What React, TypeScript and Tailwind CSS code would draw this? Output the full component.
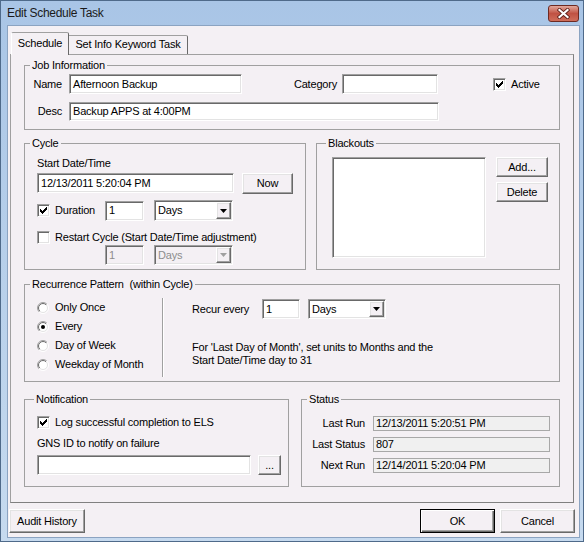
import React from 'react';

const sunken =
  'border border-[#a0a0a0] border-r-white border-b-white shadow-[inset_1px_1px_0_#696969,inset_-1px_-1px_0_#e3e3e3]';
const raised =
  'border border-white border-r-[#696969] border-b-[#696969] shadow-[inset_-1px_-1px_0_#a0a0a0,inset_1px_1px_0_#e3e3e3]';

function TextBox({ className = '', value = '', disabled = false }: { className?: string; value?: string; disabled?: boolean }) {
  return (
    <div
      className={`${sunken} ${disabled ? 'bg-[#f4f0f4] text-[#8d8d8d]' : 'bg-white'} flex items-center pl-[3px] whitespace-nowrap overflow-hidden shrink-0 ${className}`}
    >
      {value}
    </div>
  );
}

function Combo({ className = '', value, disabled = false }: { className?: string; value: string; disabled?: boolean }) {
  return (
    <div className={`${sunken} ${disabled ? 'bg-[#f4f0f4] text-[#8d8d8d]' : 'bg-white'} flex p-[1px] shrink-0 ${className}`}>
      <span className="flex-1 flex items-center pl-[2px]">{value}</span>
      <span className={`${raised} bg-[#f4f0f4] w-[15px] flex items-center justify-center`}>
        <svg width="7" height="4" viewBox="0 0 7 4">
          <path d="M0 0h7L3.5 4z" fill={disabled ? '#a0a0a0' : '#000'} />
        </svg>
      </span>
    </div>
  );
}

function Button({ className = '', label, isDefault = false }: { className?: string; label: string; isDefault?: boolean }) {
  return (
    <button
      className={`${
        isDefault
          ? 'border border-black shadow-[inset_1px_1px_0_#fff,inset_-1px_-1px_0_#696969,inset_-2px_-2px_0_#a0a0a0]'
          : raised
      } bg-[#f4f0f4] flex items-center justify-center shrink-0 ${className}`}
    >
      {label}
    </button>
  );
}

function CheckMark() {
  return (
    <svg width="7" height="7" viewBox="0 0 7 7" shapeRendering="crispEdges">
      <path
        d="M6 0h1v1h-1z M5 1h2v1h-2z M0 2h1v1h-1z M4 2h3v1h-3z M0 3h2v1h-2z M3 3h3v1h-3z M0 4h5v1h-5z M1 5h3v1h-3z M2 6h1v1h-1z"
        fill="#000"
      />
    </svg>
  );
}

function Check({ checked = false, label, labelClass = '' }: { checked?: boolean; label: string; labelClass?: string }) {
  return (
    <div className="flex items-center h-[13px] shrink-0">
      <span className={`${sunken} bg-white w-[13px] h-[13px] flex items-center justify-center shrink-0`}>
        {checked && <CheckMark />}
      </span>
      <span className={`ml-[5px] whitespace-nowrap ${labelClass}`}>{label}</span>
    </div>
  );
}

function Radio({ checked = false, label }: { checked?: boolean; label: string }) {
  return (
    <div className="flex items-center h-[19px]">
      <svg width="12" height="12" viewBox="0 0 12 12">
        <defs>
          <linearGradient id="rOuter" x1="0" y1="0" x2="1" y2="1">
            <stop offset="0.5" stopColor="#a0a0a0" />
            <stop offset="0.5" stopColor="#ffffff" />
          </linearGradient>
          <linearGradient id="rInner" x1="0" y1="0" x2="1" y2="1">
            <stop offset="0.5" stopColor="#696969" />
            <stop offset="0.5" stopColor="#e3e3e3" />
          </linearGradient>
        </defs>
        <circle cx="6" cy="6" r="5.5" fill="none" stroke="url(#rOuter)" />
        <circle cx="6" cy="6" r="4.5" fill="#fff" stroke="url(#rInner)" />
        {checked && <circle cx="6" cy="6" r="2" fill="#000" />}
      </svg>
      <span className="ml-[6px] whitespace-nowrap">{label}</span>
    </div>
  );
}

function Group({
  title,
  className = '',
  legendClass = 'ml-[5px]',
  children,
}: {
  title: string;
  className?: string;
  legendClass?: string;
  children: React.ReactNode;
}) {
  return (
    <fieldset className={`border border-[#a0a0a0] shrink-0 ${className}`}>
      <legend className={`px-[2px] leading-[13px] whitespace-pre ${legendClass}`}>{title}</legend>
      {children}
    </fieldset>
  );
}

function StatusRow({ label, value }: { label: string; value: string }) {
  return (
    <div className="flex items-center h-[15px]">
      <span className="w-[63px] text-right whitespace-nowrap">{label}</span>
      <div className="ml-[8px] w-[177px] h-[15px] border border-[#a8a8a8] bg-[#f0f0f0] flex items-center pl-[2px] whitespace-nowrap">
        {value}
      </div>
    </div>
  );
}

export default function App() {
  return (
    <div className="w-[584px] h-[542px] flex flex-col border border-[#4f6a8a] bg-gradient-to-b from-[#a9c5e6] to-[#c6daef] font-['Liberation_Sans',Arial,sans-serif] text-[11px] tracking-[-0.2px] leading-[13px] text-black overflow-hidden">
      {/* Title bar */}
      <div className="h-[24px] flex items-center pl-[6px] pr-[4px] shrink-0">
        <span className="text-[12px] tracking-[-0.3px] text-[#1a1a1a]">Edit Schedule Task</span>
        <button className="ml-auto w-[31px] h-[17px] rounded-[3px] border border-[#6e2a22] bg-gradient-to-b from-[#e1a89d] via-[#c05243] to-[#cf6d5a] flex items-center justify-center">
          <svg width="13" height="11" viewBox="0 0 13 11">
            <path d="M2.5 2 L10.5 9 M10.5 2 L2.5 9" stroke="#5a1d16" strokeWidth="3.8" strokeLinecap="square" />
            <path d="M2.5 2 L10.5 9 M10.5 2 L2.5 9" stroke="#fff" strokeWidth="2.2" strokeLinecap="square" />
          </svg>
        </button>
      </div>

      {/* Client area */}
      <div className="flex-1 ml-[6px] mr-[3px] mb-[3px] border border-[#8ba3c1] bg-[#f4f0f4] flex flex-col">
        {/* Tabs */}
        <div className="h-[29px] -mb-[1px] flex items-end pl-[3px] relative z-10 shrink-0">
          <div className="h-[23px] w-[58px] border border-b-0 border-[#a0a0a0] border-l-white border-r-[#696969] rounded-t-[2px] bg-[#f4f0f4] flex justify-center pt-[4px]">
            Schedule
          </div>
          <div className="h-[19px] mb-[1px] w-[119px] border border-b-0 border-l-0 border-[#a0a0a0] border-r-[#696969] rounded-tr-[2px] bg-[#f4f0f4] flex justify-center pt-[2px]">
            Set Info Keyword Task
          </div>
        </div>

        {/* Tab pane */}
        <div className="ml-[2px] mr-[5px] h-[449px] border border-[#a0a0a0] border-r-[#808080] border-b-[#808080] pl-[13px] pt-[4px] flex flex-col shrink-0">
          {/* Job Information */}
          <Group title="Job Information" className="w-[536px]">
            <div className="pt-[2px] pb-[8px]">
              <div className="flex items-center h-[20px]">
                <span className="w-[37px] text-right">Name</span>
                <TextBox className="ml-[7px] w-[173px] h-[20px]" value="Afternoon Backup" />
                <span className="w-[95px] text-right">Category</span>
                <TextBox className="ml-[5px] w-[96px] h-[20px]" />
                <div className="ml-[55px]">
                  <Check checked label="Active" />
                </div>
              </div>
              <div className="flex items-center h-[19px] mt-[8px]">
                <span className="w-[37px] text-right">Desc</span>
                <TextBox className="ml-[7px] w-[370px] h-[19px]" value="Backup APPS at 4:00PM" />
              </div>
            </div>
          </Group>

          {/* Cycle + Blackouts */}
          <div className="flex gap-[10px] mt-[7px] w-[536px]">
            <Group title="Cycle" className="w-[282px]">
              <div className="pl-[12px] pt-[7px]">
                <div>Start Date/Time</div>
                <div className="flex mt-[3px]">
                  <TextBox className="w-[197px] h-[20px]" value="12/13/2011 5:20:04 PM" />
                  <Button className="ml-[8px] w-[51px] h-[21px]" label="Now" />
                </div>
                <div className="flex items-center h-[21px] mt-[6px]">
                  <Check checked label="Duration" labelClass="w-[50px]" />
                  <TextBox className="w-[39px] h-[20px]" value="1" />
                  <Combo className="ml-[10px] w-[79px] h-[21px]" value="Days" />
                </div>
                <div className="mt-[10px]">
                  <Check label="Restart Cycle (Start Date/Time adjustment)" />
                </div>
                <div className="flex mt-[1px] pl-[68px]">
                  <TextBox disabled className="w-[39px] h-[20px]" value="1" />
                  <Combo disabled className="ml-[10px] w-[79px] h-[20px]" value="Days" />
                </div>
              </div>
            </Group>
            <Group title="Blackouts" legendClass="ml-[9px]" className="flex-1">
              <div className="flex pl-[15px] pt-[7px] pb-[11px]">
                <div className={`${sunken} bg-white w-[154px] h-[101px]`} />
                <div className="ml-[10px] flex flex-col">
                  <Button className="w-[52px] h-[20px]" label="Add..." />
                  <Button className="w-[52px] h-[20px] mt-[5px]" label="Delete" />
                </div>
              </div>
            </Group>
          </div>

          {/* Recurrence */}
          <Group title="Recurrence Pattern  (within Cycle)" className="w-[536px] mt-[8px]">
            <div className="flex h-[90px]">
              <div className="w-[137px] pl-[12px] pt-[7px]">
                <Radio label="Only Once" />
                <Radio checked label="Every" />
                <Radio label="Day of Week" />
                <Radio label="Weekday of Month" />
              </div>
              <div className="w-[2px] border-l border-r border-l-[#a0a0a0] border-r-white mt-[7px] mb-[4px]" />
              <div className="pl-[28px] pt-[8px]">
                <div className="flex items-center h-[20px]">
                  <span className="w-[70px]">Recur every</span>
                  <TextBox className="w-[38px] h-[20px]" value="1" />
                  <Combo className="ml-[8px] w-[78px] h-[20px]" value="Days" />
                </div>
                <p className="mt-[22px]">
                  For 'Last Day of Month', set units to Months and the
                  <br />
                  Start Date/Time day to 31
                </p>
              </div>
            </div>
          </Group>

          {/* Notification + Status */}
          <div className="flex gap-[12px] mt-[11px] w-[536px]">
            <Group title="Notification" legendClass="ml-[9px]" className="w-[265px]">
              <div className="pl-[12px] pt-[10px] pb-[11px]">
                <Check checked label="Log successful completion to ELS" />
                <div className="mt-[8px]">GNS ID to notify on failure</div>
                <div className="flex mt-[5px]">
                  <TextBox className="w-[214px] h-[20px]" />
                  <Button className="ml-[7px] w-[23px] h-[20px]" label="..." />
                </div>
              </div>
            </Group>
            <Group title="Status" className="flex-1">
              <div className="pt-[10px] flex flex-col gap-[6px]">
                <StatusRow label="Last Run" value="12/13/2011 5:20:51 PM" />
                <StatusRow label="Last Status" value="807" />
                <StatusRow label="Next Run" value="12/14/2011 5:20:04 PM" />
              </div>
            </Group>
          </div>
        </div>

        {/* Bottom buttons */}
        <div className="flex mt-[6px] pl-[1px] pr-[4px] shrink-0">
          <Button className="w-[76px] h-[24px]" label="Audit History" />
          <Button isDefault className="ml-auto w-[75px] h-[24px]" label="OK" />
          <Button className="ml-[5px] w-[75px] h-[24px]" label="Cancel" />
        </div>
      </div>
    </div>
  );
}
